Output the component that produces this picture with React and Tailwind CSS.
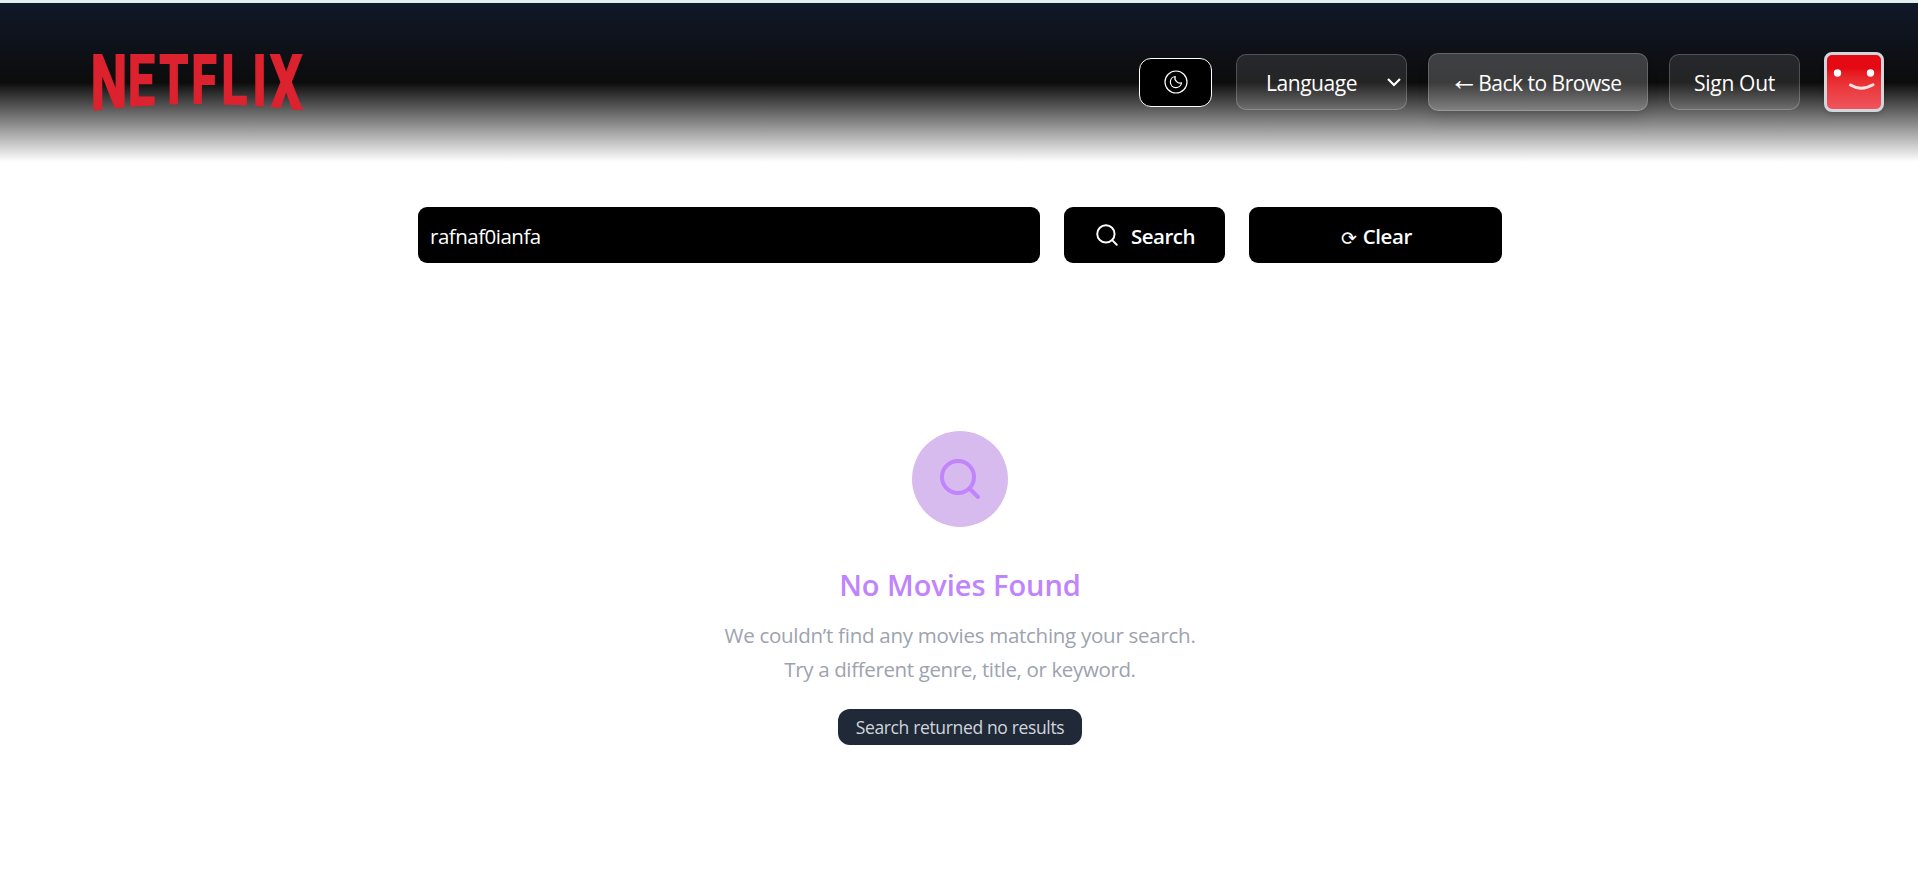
const LETTERS = [
  { ch: 'N', x: -0.8, size: 77 },
  { ch: 'E', x: 36.3, size: 71.5 },
  { ch: 'T', x: 68, size: 69 },
  { ch: 'F', x: 99.8, size: 68.5 },
  { ch: 'L', x: 130, size: 70.5 },
  { ch: 'I', x: 160.8, size: 72 },
  { ch: 'X', x: 178.2, size: 77 },
];

function Logo() {
  return (
    <svg width="212" height="60" viewBox="0 0 212 60" className="block overflow-visible">
      <defs>
        <clipPath id="arch">
          <path d="M-2 0H214V57Q106 43 -2 57Z" />
        </clipPath>
      </defs>
      <g clipPath="url(#arch)">
        <text
          fontFamily="Roboto, sans-serif"
          fontWeight="700"
          fill="#db222e"
          stroke="#db222e"
          strokeWidth="2.2"
          transform="scale(0.67 1)"
        >
          {LETTERS.map((l) => (
            <tspan key={l.ch} x={(l.x - 1.4) / 0.67} y={l.size * 0.711 + 1.1} fontSize={l.size}>
              {l.ch}
            </tspan>
          ))}
        </text>
      </g>
    </svg>
  );
}

function MoonIcon() {
  return (
    <svg width="24" height="24" viewBox="0 0 24 24" fill="none" stroke="white" strokeWidth="1.2" strokeLinejoin="round">
      <circle cx="12" cy="12" r="11" />
      <path d="M11.2 6.5A5.6 5.6 0 1 0 17.5 12.8A4.6 4.6 0 0 1 12.6 11.6A4.6 4.6 0 0 1 11.2 6.5Z" />
    </svg>
  );
}

function Magnifier({ className, strokeWidth }) {
  return (
    <svg viewBox="0 0 24 24" fill="none" stroke="currentColor" strokeWidth={strokeWidth} strokeLinecap="round" className={className}>
      <circle cx="11" cy="11" r="8" />
      <path d="M17 17L21 21" />
    </svg>
  );
}

function Avatar() {
  return (
    <div className="ml-6 h-15 w-15 overflow-hidden rounded-lg border-3 border-gray-300 bg-linear-to-b from-[#e50914] from-25% to-[#f0545e] shadow-md">
      <svg width="54" height="54" viewBox="0 0 54 54" fill="none">
        <circle cx="10.5" cy="18" r="3.7" fill="white" />
        <circle cx="43.5" cy="18" r="3.7" fill="white" />
        <path d="M23.5 30Q34 36.5 46 29.7" stroke="#fde4e5" strokeWidth="3" strokeLinecap="round" />
      </svg>
    </div>
  );
}

function Header() {
  return (
    <header className="flex h-[159px] items-start justify-between bg-linear-to-b from-gray-900 via-[#0c0c0c] to-transparent pr-[34px] pl-[93px] text-white">
      <div className="pt-[51px]">
        <Logo />
      </div>
      <nav className="mt-[49px] flex h-15 items-center text-[21px]">
        <button className="flex h-[49px] w-[73px] items-center justify-center rounded-xl border border-white bg-black">
          <MoonIcon />
        </button>
        <button className="ml-6 flex h-14 w-[171px] items-center justify-between rounded-[10px] border border-white/20 bg-white/10 pt-1 pr-[5px] pl-[29px] tracking-[-0.45px]">
          <span>Language</span>
          <svg width="14" height="9" viewBox="0 0 14 9" fill="none" stroke="white" strokeWidth="2.2" className="-mt-1">
            <path d="M1 1L7 7L13 1" />
          </svg>
        </button>
        <button className="ml-[21px] flex h-[58px] w-[220px] items-center justify-center whitespace-nowrap rounded-[10px] border border-white/20 bg-white/20 pt-1 tracking-[-0.5px] shadow-lg">
          <span className="mr-[5px] font-['Noto_Sans_Math','DejaVu_Sans',sans-serif] text-[19px]">←</span>
          <span>Back to Browse</span>
        </button>
        <button className="ml-[21px] flex h-14 w-[131px] items-center justify-center whitespace-nowrap rounded-[10px] border border-white/20 bg-white/10 pt-1 tracking-[-0.3px]">
          Sign Out
        </button>
        <Avatar />
      </nav>
    </header>
  );
}

function SearchBar() {
  return (
    <form className="ml-[418px] mt-[45px] flex w-[1084px] gap-6 text-[20.5px] text-white" onSubmit={(e) => e.preventDefault()}>
      <input
        defaultValue="rafnaf0ianfa"
        className="h-14 w-[622px] rounded-[9px] bg-black px-3 pt-0.5 tracking-[-0.5px] outline-none"
      />
      <button className="flex h-14 w-[161px] items-center rounded-[9px] bg-black pt-0.5 pl-[30px] font-semibold tracking-[-0.5px]">
        <Magnifier className="-mt-0.5 mr-[11px] h-[26px] w-[26px]" strokeWidth={1.8} />
        Search
      </button>
      <button className="flex h-14 w-[253px] items-center justify-center gap-[6px] rounded-[9px] bg-black pt-0.5 pl-0.5 font-semibold tracking-[-0.4px]">
        <span className="pt-1 text-[19px] font-normal">⟳</span>
        <span>Clear</span>
      </button>
    </form>
  );
}

function EmptyState() {
  return (
    <section className="mt-[168px] flex flex-col items-center pl-0.5">
      <div className="flex h-24 w-24 items-center justify-center rounded-full bg-[#d8bbee] text-[#c084fc]">
        <Magnifier className="h-12 w-12" strokeWidth={2} />
      </div>
      <h2 className="mt-[38px] text-[29px] leading-10 font-semibold tracking-[-0.05px] text-[#c084fc]">No Movies Found</h2>
      <p className="mt-[13px] text-center text-[20.5px] leading-[34px] tracking-[-0.27px] whitespace-nowrap text-[#9ca3af]">
        We couldn’t find any movies matching your search.
        <br />
        <span className="tracking-[-0.36px]">Try a different genre, title, or keyword.</span>
      </p>
      <div className="mt-[23px] flex h-9 w-[244px] items-center justify-center rounded-xl bg-[#1f2937] text-[17.5px] tracking-[-0.35px] whitespace-nowrap text-gray-300">
        Search returned no results
      </div>
    </section>
  );
}

export default function App() {
  return (
    <div className="h-[871px] overflow-hidden border-t-3 border-[#e3eeee] bg-white font-['Open_Sans','Noto_Sans',sans-serif]">
      <Header />
      <SearchBar />
      <EmptyState />
    </div>
  );
}
